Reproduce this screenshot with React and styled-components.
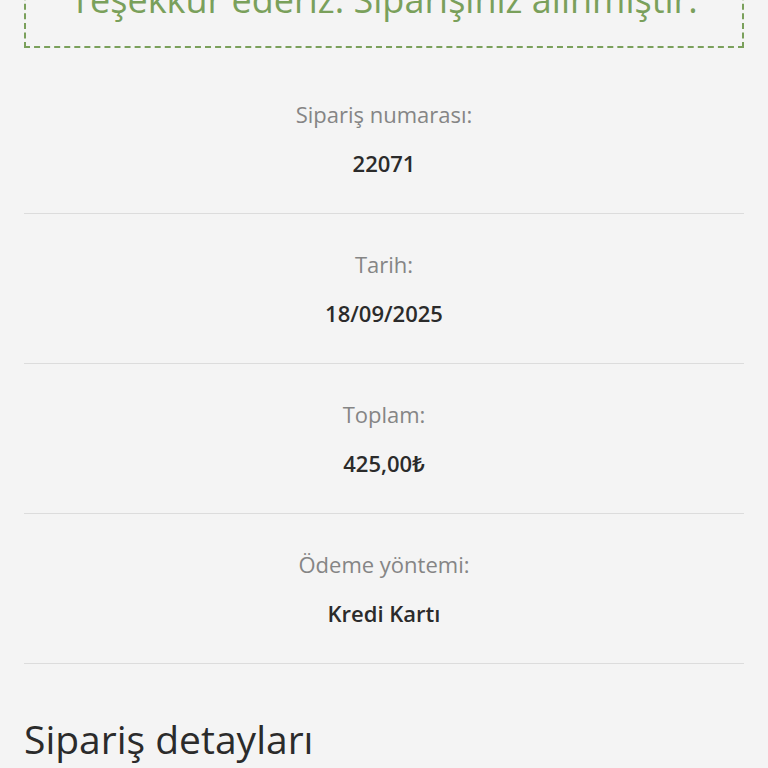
import React from "react";
import styled, { createGlobalStyle } from "styled-components";

const Global = createGlobalStyle`
  html, body { margin: 0; padding: 0; background: #f4f4f4; }
  body { font-family: "Open Sans", "Noto Sans", sans-serif; }
`;

const Page = styled.div`
  padding: 0 24px;
  overflow: hidden;
  height: 768px;
  box-sizing: border-box;
`;

const Notice = styled.div`
  margin-top: -44px;
  border: 2px dashed #7aa05b;
  padding: 20px 10px 24px;
  text-align: center;
  color: #7aa05b;
  font-size: 36px;
  line-height: 44px;
  font-weight: 400;
  white-space: nowrap;
`;

const List = styled.ul`
  list-style: none;
  margin: 16px 0 0;
  padding: 0;
`;

const Item = styled.li`
  display: flex;
  flex-direction: column;
  align-items: center;
  gap: 19px;
  padding: 35px 0;
  border-bottom: 1px solid #dcdcdc;
`;

const Label = styled.span`
  font-size: 22px;
  line-height: 30px;
  color: #858585;
`;

const Value = styled.strong`
  font-size: 22px;
  line-height: 30px;
  font-weight: 600;
  color: #2b2b2b;
`;

const Heading = styled.h2`
  margin: 52px 0 0;
  font-size: 39px;
  line-height: 46px;
  font-weight: 500;
  color: #2b2b2b;
`;

const rows = [
  ["Sipariş numarası:", "22071"],
  ["Tarih:", "18/09/2025"],
  ["Toplam:", "425,00₺"],
  ["Ödeme yöntemi:", "Kredi Kartı"],
];

export default function App() {
  return (
    <Page>
      <Global />
      <Notice>Teşekkür ederiz. Siparişiniz alınmıştır.</Notice>
      <List>
        {rows.map(([l, v]) => (
          <Item key={l}>
            <Label>{l}</Label>
            <Value>{v}</Value>
          </Item>
        ))}
      </List>
      <Heading>Sipariş detayları</Heading>
    </Page>
  );
}
